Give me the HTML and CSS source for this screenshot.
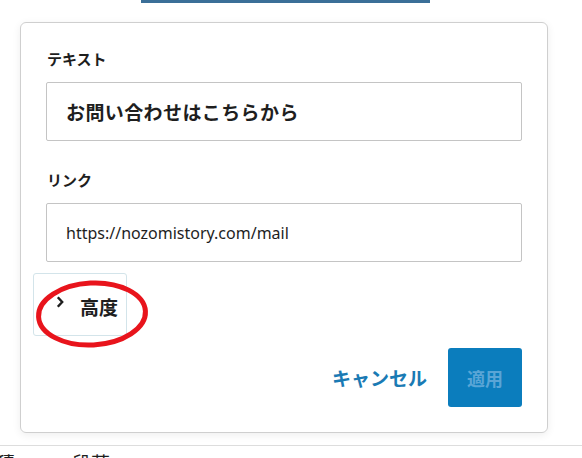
FILE: index.html
```html
<!DOCTYPE html>
<html lang="ja">
<head>
<meta charset="utf-8">
<title>リンク設定</title>
<link rel="stylesheet" href="styles.css">
</head>
<body>
<div class="topline"></div>
<div class="card">
  <div class="field">
    <label class="label">テキスト</label>
    <div class="input input-text">お問い合わせはこちらから</div>
  </div>
  <div class="field field-link">
    <label class="label">リンク</label>
    <div class="input input-url">https://nozomistory.com/mail</div>
  </div>
  <div class="advanced">
    <button class="toggle">
      <svg class="chev" width="8" height="12" viewBox="0 0 8 12"><path d="M1.8 1.2 L6.2 6 L1.8 10.8" fill="none" stroke="#1e1e1e" stroke-width="2.4"/></svg>
      <span>高度</span>
    </button>
    <svg class="ring" width="124" height="78" viewBox="0 0 124 78"><ellipse cx="60" cy="36" rx="53.5" ry="31" fill="none" stroke="#e8141c" stroke-width="5" transform="rotate(-3 60 36)"/></svg>
  </div>
  <div class="actions">
    <button class="cancel">キャンセル</button>
    <button class="apply">適用</button>
  </div>
</div>
<div class="bottom">
  <span class="b1">積</span>
  <span class="b2">段落</span>
</div>
</body>
</html>
```
FILE: styles.css
```css
html, body {
  margin: 0;
  padding: 0;
  background: #ffffff;
}
body {
  width: 582px;
  height: 458px;
  overflow: hidden;
  font-family: "Noto Sans CJK JP", "Noto Sans", sans-serif;
  color: #1e1e1e;
}
.topline {
  margin-left: 141px;
  width: 289px;
  height: 3px;
  background: #3b6f98;
}
.card {
  box-sizing: border-box;
  margin: 19px 0 0 20px;
  width: 528px;
  height: 411px;
  border: 1px solid #cfcfcf;
  border-radius: 6px;
  box-shadow: 0 2px 8px rgba(0, 0, 0, 0.07);
  padding: 26px 25px 0 25px;
  display: flex;
  flex-direction: column;
}
.field {
  display: flex;
  flex-direction: column;
}
.field-link {
  margin-top: 29px;
}
.label {
  font-size: 15px;
  font-weight: 700;
  line-height: 20px;
  height: 20px;
  padding-left: 1px;
}
.input {
  box-sizing: border-box;
  margin-top: 13px;
  height: 59px;
  border: 1px solid #c4c4c4;
  border-radius: 2px;
  display: flex;
  align-items: center;
  padding-left: 19px;
}
.input-text {
  font-size: 19px;
  font-weight: 700;
  letter-spacing: 0.4px;
}
.input-url {
  font-family: "Noto Sans", "Noto Sans CJK JP", sans-serif;
  font-size: 16px;
  color: #1e1e1e;
}
.advanced {
  position: relative;
  margin-top: 11px;
  margin-left: -13px;
  height: 63px;
}
.toggle {
  box-sizing: border-box;
  width: 94px;
  height: 63px;
  border: 1px solid #d3e4ea;
  border-radius: 3px;
  background: #ffffff;
  display: flex;
  align-items: center;
  padding: 0 0 0 22px;
  font-family: "Noto Sans CJK JP", sans-serif;
  font-size: 19px;
  font-weight: 700;
  color: #1e1e1e;
}
.chev {
  margin-top: -6px;
}
.toggle span {
  margin-left: 16px;
  margin-top: 4px;
}
.ring {
  position: absolute;
  left: -1px;
  top: 5px;
}
.actions {
  margin-top: 12px;
  display: flex;
  justify-content: flex-end;
  align-items: center;
  gap: 21px;
}
.cancel {
  border: none;
  background: none;
  padding: 0;
  font-family: "Noto Sans CJK JP", sans-serif;
  font-size: 19px;
  font-weight: 700;
  color: #1a7ab4;
}
.apply {
  width: 74px;
  height: 59px;
  border: none;
  border-radius: 3px;
  background: #0b7dbd;
  color: #5aa5d6;
  font-family: "Noto Sans CJK JP", sans-serif;
  font-size: 18px;
  font-weight: 700;
  padding: 0;
}
.bottom {
  box-sizing: border-box;
  margin-top: 12px;
  border-top: 1px solid #dddddd;
  height: 14px;
  overflow: hidden;
  font-size: 19px;
  line-height: 24px;
  padding-top: 5px;
  display: flex;
}
.b1 {
  margin-left: -4px;
}
.b2 {
  margin-left: 57px;
}
```
